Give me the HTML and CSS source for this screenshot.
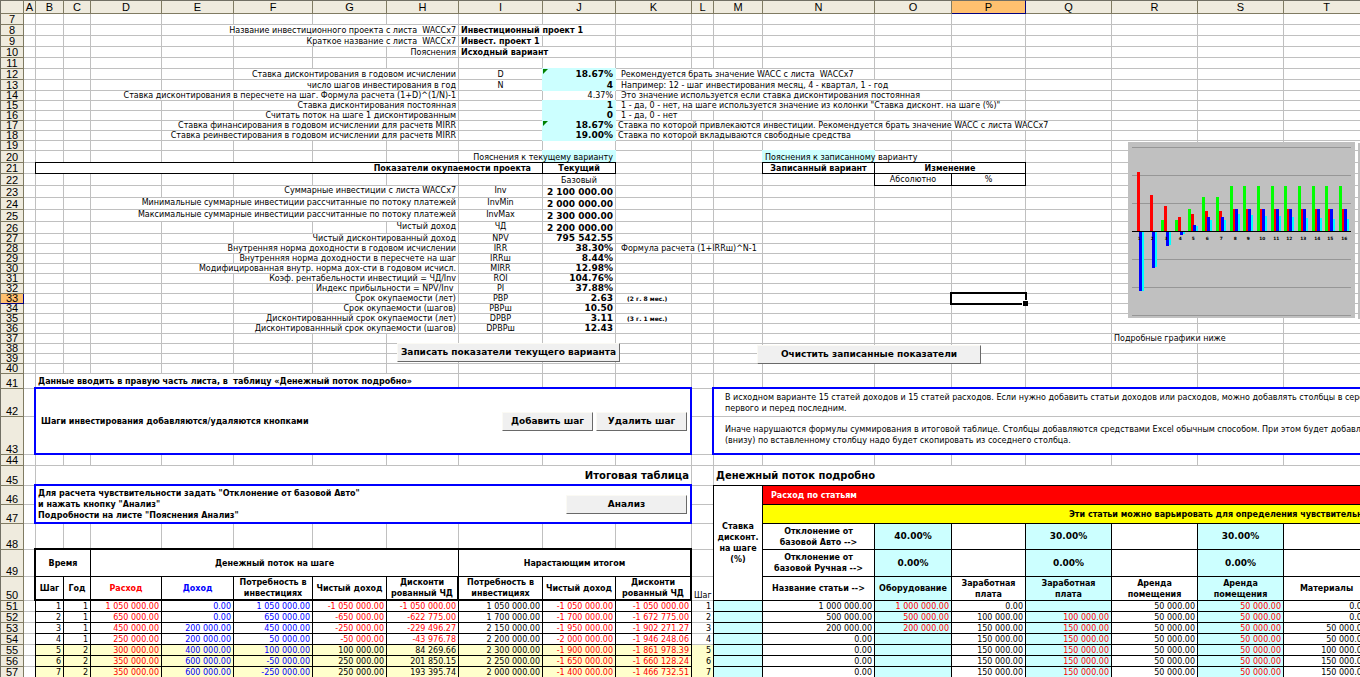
FILE: index.html
```html
<!DOCTYPE html>
<html lang="ru">
<head>
<meta charset="utf-8">
<title>Инвестиционный проект</title>
<link rel="stylesheet" href="styles.css">
</head>
<body>
<main class="sheet">
  <table class="grid" id="grid"></table>
  <button class="btn save" type="button">Записать показатели текущего варианта</button>
  <button class="btn clear" type="button">Очистить записанные показатели</button>
  <svg class="chart" id="chart" viewBox="0 0 681 528" role="img" aria-label="Денежный поток по шагам"></svg>
  <div class="next-chart"></div>
</main>
<script src="sheet.js"></script>
</body>
</html>
```

FILE: styles.css
```css
* { box-sizing: border-box; }

body {
  margin: 0;
  background: #fff;
  color: #000;
  font-family: "DejaVu Sans", Verdana, sans-serif;
  font-size: 8px;
}

.sheet {
  position: relative;
  height: 100vh;
  overflow: hidden;
}

.grid {
  table-layout: fixed;
  width: 100%;
  min-width: 1370px;
  border-collapse: separate;
  border-spacing: 0;
}

td, th {
  padding: 0 2px;
  border: 0 solid #c0c0c0;
  border-width: 0 1px 1px 0;
  line-height: 9px;
  font-weight: normal;
  text-align: left;
  vertical-align: middle;
  white-space: nowrap;
}

/* column and row headings */
th {
  padding: 0;
  background: #efebde;
  border-color: #807b62;
  font-family: "Liberation Sans", Arial, sans-serif;
  font-size: 11px;
  text-align: center;
}
thead th { border-top: 1px solid #716f64; line-height: 12px; }
tbody th { vertical-align: bottom; }
tr > th:first-child { border-left: 1px solid #716f64; }
th.current { background: #ffc06f; border-right-color: #000080; border-bottom-color: #000080; }

/* alignment */
.r { text-align: right; }
.c { text-align: center; }
.top { vertical-align: top; }
.bot { vertical-align: bottom; }
.ind { padding-left: 5px; }
.wide { padding-left: 8px; }
.inset { padding-right: 11px; }
.note { padding-left: 11px; }
.spill > div { display: flex; justify-content: flex-end; }

/* text */
.b { font-weight: bold; }
.val { font-size: 9px; font-weight: bold; text-align: right; vertical-align: bottom; }
.pct { font-size: 9px; font-weight: bold; text-align: center; }
.title { font-size: 10px; font-weight: bold; line-height: 12px; }
.tiny { font-size: 6px; font-weight: bold; }
.lines { line-height: 11px; }
.red { color: #f00; }
.blue { color: #00f; }
.white { color: #fff; }

/* fills */
.cyan { background: #cff; border-color: #cff; box-shadow: -1px 0 #cff, 0 -1px #cff, -1px -1px #cff; }
.yel { background: #ffc; border-color: #ffc; }
.bgred { background: #f00; }
.bgyellow { background: #ff0; padding-left: 306px; }

/* frames */
.k, .frame { position: relative; }
.k { border-color: #000; box-shadow: -1px 0 #000, 0 -1px #000, -1px -1px #000; }
.hb { border-bottom-width: 2px; }
.hr { border-right-width: 2px; }
.ht { box-shadow: -1px 0 #000, 0 -2px #000, -1px -2px #000; }
.hl { box-shadow: -2px 0 #000, 0 -1px #000, -2px -1px #000; }
.ht.hl { box-shadow: -2px 0 #000, 0 -2px #000, -2px -2px #000; }
.frame {
  border-color: #00f;
  border-width: 0 2px 2px 0;
  box-shadow: -2px 0 #00f, 0 -2px #00f, -2px -2px #00f;
}
.frame-top { box-shadow: -2px 0 #00f, 0 -2px #00f, -2px -2px #00f; }
.frame-bottom { border-bottom: 2px solid #00f; box-shadow: -2px 0 #00f; }
.info { padding-left: 11px; line-height: 11px; }

/* error mark in the corner of a cell */
.mark { position: relative; }
.mark::before {
  content: "";
  position: absolute;
  top: 0;
  left: 0;
  border: solid transparent;
  border-width: 0 5px 5px 0;
  border-top: 5px solid #008000;
  border-bottom: 0;
}

/* active cell */
.active { position: relative; }
.active::before {
  content: "";
  position: absolute;
  inset: -2px;
  border: 2px solid #000;
}
.active::after {
  content: "";
  position: absolute;
  right: -3px;
  bottom: -3px;
  width: 5px;
  height: 5px;
  background: #000;
  border: solid #fff;
  border-width: 1px 0 0 1px;
}

.bar { display: flex; align-items: center; gap: 3px; padding-right: 1px; }
.bar span { flex: 1; }

.btn {
  width: 91px;
  height: 19px;
  padding: 0;
  background: #f0f0f0;
  border: 1px solid #fbfaf4;
  border-right-color: #696969;
  border-bottom-color: #696969;
  font: bold 9px/11px "DejaVu Sans", Verdana, sans-serif;
  color: #000;
  text-align: center;
  white-space: nowrap;
}
.btn.analysis { width: 121px; }
.btn.save { position: absolute; left: 397px; top: 343px; width: 223px; }
.btn.clear { position: absolute; left: 757px; top: 345px; width: 224px; }

.chart {
  position: absolute;
  left: 1128px;
  top: 142px;
  width: 227px;
  height: 176px;
  background: #c0c0c0;
  shape-rendering: crispEdges;
}
.chart text { font: bold 13px "DejaVu Sans", sans-serif; text-anchor: middle; }
.next-chart {
  position: absolute;
  left: 1358px;
  top: 143px;
  width: 227px;
  height: 176px;
  background: #c0c0c0;
}
```

FILE: sheet.js
```js
const columns = { A: 12, B: 28, C: 27, D: 71, E: 72, F: 79, G: 74, H: 72, I: 84, J: 73,
  K: 76, L: 22, M: 49, N: 112, O: 77, P: 74, Q: 86, R: 86, S: 86, T: 0 };
const letters = Object.keys(columns);

const heights = {};
const setHeight = (from, to, h) => { for (let r = from; r <= to; r++) heights[r] = h; };
setHeight(7, 13, 11);
setHeight(14, 19, 10);
setHeight(20, 20, 12);
setHeight(21, 21, 11);
setHeight(22, 26, 12);
setHeight(27, 40, 10);
setHeight(41, 41, 15);
setHeight(42, 42, 28);
setHeight(43, 43, 38);
setHeight(44, 44, 11);
setHeight(45, 45, 20);
setHeight(46, 47, 19);
setHeight(48, 48, 26);
setHeight(49, 49, 27);
setHeight(50, 50, 24);
setHeight(51, 57, 11);

// address: [classes, content]
const cells = {
  'E8:H8': ['r', 'Название инвестиционного проекта с листа &nbsp;WACCx7'],
  'I8:J8': ['b', 'Инвестиционный проект 1'],
  'F9:H9': ['r', 'Краткое название с листа &nbsp;WACCx7'],
  'I9': ['b', 'Инвест. проект 1'],
  'H10': ['r', 'Пояснения'],
  'I10:J10': ['b', 'Исходный вариант'],
  'F12:H12': ['r', 'Ставка дисконтирования в годовом исчислении'],
  'I12': ['c', 'D'],
  'J12': ['val cyan mark', '18.67%'],
  'K12:N12': ['ind', 'Рекомендуется брать значение WACC с листа &nbsp;WACCx7'],
  'F13:H13': ['r', 'число шагов инвестирования в год'],
  'I13': ['c', 'N'],
  'J13': ['val cyan', '4'],
  'K13:O13': ['ind', 'Например: 12 - шаг инвестирования месяц, 4 - квартал, 1 - год'],
  'D14:H14': ['r', 'Ставка дисконтирования в пересчете на шаг. Формула расчета (1+D)^(1/N)-1'],
  'J14': ['r bot', '4.37%'],
  'K14:O14': ['ind', 'Это значение используется если ставка дисконтирования постоянная'],
  'F15:H15': ['r', 'Ставка дисконтирования постоянная'],
  'J15': ['val cyan', '1'],
  'K15:P15': ['ind', '1 - да, 0 - нет, на шаге используется значение из колонки "Ставка дисконт. на шаге (%)"'],
  'F16:H16': ['r', 'Считать поток на шаге 1 дисконтированным'],
  'J16': ['val cyan', '0'],
  'K16': ['ind', '1 - да, 0 - нет'],
  'E17:H17': ['r', 'Ставка финансирования в годовом исчислении для расчетв MIRR'],
  'J17': ['val cyan mark', '18.67%'],
  'K17:Q17': ['', 'Ставка по которой привлекаются инвестиции. Рекомендуется брать значение WACC с листа WACCx7'],
  'E18:H18': ['r', 'Ставка реинвестирования в годовом исчислении для расчетв MIRR'],
  'J18': ['val cyan', '19.00%'],
  'K18:N18': ['', 'Ставка по которой вкладываются свободные средства'],
  'J20': ['bot cyan spill', '<div>Пояснения к текущему варианту</div>'],
  'N20': ['bot cyan', 'Пояснения к записанному варианту'],
  'B21:I21': ['r b k inset', 'Показатели окупаемости проекта'],
  'J21': ['c b k', 'Текущий'],
  'N21': ['c b k', 'Записанный вариант'],
  'O21:P21': ['c b k', 'Изменение'],
  'J22': ['c bot', 'Базовый'],
  'O22': ['c k', 'Абсолютно'],
  'P22': ['c k', '%'],
  'K28:M28': ['ind', 'Формула расчета (1+IRRш)^N-1'],
  'K33': ['note tiny', '(2 г. 8 мес.)'],
  'K35': ['note tiny', '(3 г. 1 мес.)'],
  'P33': ['active', ''],
  'R37:S37': ['', 'Подробные графики ниже'],
  'B41:H41': ['b', 'Данные вводить в правую часть листа, в &nbsp;таблицу «Денежный поток подробно»'],
  'B42:K43': ['b frame ind', '<div class="bar"><span>Шаги инвестирования добавляются/удаляются кнопками</span>' +
    '<button class="btn" type="button">Добавить шаг</button><button class="btn" type="button">Удалить шаг</button></div>'],
  'M42:T42': ['info frame-top', 'В исходном варианте 15 статей доходов и 15 статей расходов. Если нужно добавить статьи доходов или расходов, можно добавлять столбцы в середину, после<br>первого и перед последним.'],
  'M43:T43': ['info frame-bottom', 'Иначе нарушаются формулы суммирования в итоговой таблице. Столбцы добавляются средствами Excel обычным способом. При этом будет добавлен<br>(внизу) по вставленному столбцу надо будет скопировать из соседнего столбца.'],
  'B45:K45': ['title r', 'Итоговая таблица'],
  'M45:T45': ['title', 'Денежный поток подробно'],
  'B46:K47': ['b frame', '<div class="bar lines"><span>Для расчета чувствительности задать "Отклонение от базовой Авто"<br>и нажать кнопку "Анализ"<br>Подробности на листе "Пояснения Анализ"</span>' +
    '<button class="btn analysis" type="button">Анализ</button></div>'],
  'M46:M50': ['c b k lines', 'Ставка<br>дисконт.<br>на шаге<br>(%)'],
  'N46:T46': ['b k bgred white wide', 'Расход по статьям'],
  'N47:T47': ['b k bgyellow', 'Эти статьи можно варьировать для определения чувствительности'],
  'N48': ['c b k lines', 'Отклонение от<br>базовой Авто --&gt;'],
  'O48': ['pct cyan k', '40.00%'], 'P48': ['k', ''],
  'Q48': ['pct cyan k', '30.00%'], 'R48': ['k', ''],
  'S48': ['pct cyan k', '30.00%'], 'T48': ['k', ''],
  'B49:C49': ['c b k ht hl', 'Время'],
  'D49:H49': ['c b k ht', 'Денежный поток на шаге'],
  'I49:K49': ['c b k ht hr', 'Нарастающим итогом'],
  'N49': ['c b k lines', 'Отклонение от<br>базовой Ручная --&gt;'],
  'O49': ['pct cyan k', '0.00%'], 'P49': ['k', ''],
  'Q49': ['pct cyan k', '0.00%'], 'R49': ['k', ''],
  'S49': ['pct cyan k', '0.00%'], 'T49': ['k', ''],
  'B50': ['c b k hl hb', 'Шаг'],
  'C50': ['c b k hb', 'Год'],
  'D50': ['c b k hb red', 'Расход'],
  'E50': ['c b k hb blue', 'Доход'],
  'F50': ['c b k hb lines', 'Потребность в<br>инвестициях'],
  'G50': ['c b k hb', 'Чистый доход'],
  'H50': ['c b k hb hr lines', 'Дисконти<br>рованный ЧД'],
  'I50': ['c b k hb lines', 'Потребность в<br>инвестициях'],
  'J50': ['c b k hb', 'Чистый доход'],
  'K50': ['c b k hb hr lines', 'Дисконти<br>рованный ЧД'],
  'L50': ['r bot', 'Шаг'],
  'N50': ['c b k', 'Название статьи --&gt;'],
  'O50': ['c b cyan k', 'Оборудование'],
  'P50': ['c b k lines', 'Заработная<br>плата'],
  'Q50': ['c b cyan k lines', 'Заработная<br>плата'],
  'R50': ['c b k lines', 'Аренда<br>помещения'],
  'S50': ['c b cyan k lines', 'Аренда<br>помещения'],
  'T50': ['c b k', 'Материалы']
};

// payback indicators, rows 23-36: [first column, label, symbol, value]
[
  ['F', 'Суммарные инвестиции с листа WACCx7', 'Inv', '2 100 000.00'],
  ['D', 'Минимальные суммарные инвестиции рассчитанные по потоку платежей', 'InvMin', '2 000 000.00'],
  ['D', 'Максимальные суммарные инвестиции рассчитанные по потоку платежей', 'InvMax', '2 300 000.00'],
  ['H', 'Чистый доход', 'ЧД', '2 200 000.00'],
  ['F', 'Чистый дисконтированный доход', 'NPV', '795 542.55'],
  ['E', 'Внутренняя норма доходности в годовом исчислении', 'IRR', '38.30%'],
  ['F', 'Внутренняя норма доходности в пересчете на шаг', 'IRRш', '8.44%'],
  ['E', 'Модифицированная внутр. норма дох-сти в годовом исчисл.', 'MIRR', '12.98%'],
  ['F', 'Коэф. рентабельности инвестиций = ЧД/Inv', 'ROI', '104.76%'],
  ['G', 'Индекс прибыльности = NPV/Inv&nbsp;', 'PI', '37.88%'],
  ['G', 'Срок окупаемости (лет)', 'PBP', '2.63'],
  ['G', 'Срок окупаемости (шагов)', 'PBPш', '10.50'],
  ['F', 'Дисконтированнный срок окупаемости (лет)', 'DPBP', '3.11'],
  ['F', 'Дисконтированнный срок окупаемости (шагов)', 'DPBPш', '12.43']
].forEach(([from, label, symbol, value], i) => {
  const row = 23 + i;
  cells[from === 'H' ? `H${row}` : `${from}${row}:H${row}`] = ['r top', label];
  cells[`I${row}`] = ['c top', symbol];
  cells[`J${row}`] = ['val', value];
});

// cash flow, rows 51-57, columns B-T
[
  '1|1|1 050 000.00|0.00|1 050 000.00|-1 050 000.00|-1 050 000.00|1 050 000.00|-1 050 000.00|-1 050 000.00|1||1 000 000.00|1 000 000.00|0.00||50 000.00|50 000.00|0.00',
  '2|1|650 000.00|0.00|650 000.00|-650 000.00|-622 775.00|1 700 000.00|-1 700 000.00|-1 672 775.00|2||500 000.00|500 000.00|100 000.00|100 000.00|50 000.00|50 000.00|0.00',
  '3|1|450 000.00|200 000.00|450 000.00|-250 000.00|-229 496.27|2 150 000.00|-1 950 000.00|-1 902 271.27|3||200 000.00|200 000.00|150 000.00|150 000.00|50 000.00|50 000.00|50 000.00',
  '4|1|250 000.00|200 000.00|50 000.00|-50 000.00|-43 976.78|2 200 000.00|-2 000 000.00|-1 946 248.06|4||0.00||150 000.00|150 000.00|50 000.00|50 000.00|50 000.00',
  '5|2|300 000.00|400 000.00|100 000.00|100 000.00|84 269.66|2 300 000.00|-1 900 000.00|-1 861 978.39|5||0.00||150 000.00|150 000.00|50 000.00|50 000.00|100 000.00',
  '6|2|350 000.00|600 000.00|-50 000.00|250 000.00|201 850.15|2 250 000.00|-1 650 000.00|-1 660 128.24|6||0.00||150 000.00|150 000.00|50 000.00|50 000.00|150 000.00',
  '7|2|350 000.00|600 000.00|-250 000.00|250 000.00|193 395.74|2 000 000.00|-1 400 000.00|-1 466 732.51|7||0.00||150 000.00|150 000.00|50 000.00|50 000.00|150 000.00'
].forEach((line, i) => {
  line.split('|').forEach((text, j) => {
    const col = letters[j + 1];
    const style = ['r'];
    if (i > 3 && col <= 'L') style.push('yel');
    if ('MOQS'.includes(col)) style.push('cyan');
    if (col !== 'L') style.push('k');
    if ('DOQS'.includes(col) || ('GHJK'.includes(col) && text[0] === '-')) style.push('red');
    if ('EF'.includes(col)) style.push('blue');
    cells[col + (51 + i)] = [style.join(' '), text];
  });
});

const ranges = {};
for (const [address, [style, content]] of Object.entries(cells)) {
  const [from, to = from] = address.split(':');
  ranges[from] = {
    style, content,
    cols: letters.indexOf(to[0]) - letters.indexOf(from[0]) + 1,
    rows: to.slice(1) - from.slice(1) + 1
  };
}

const currentCol = 'P', currentRow = 33;
let html = '<colgroup><col style="width:24px">' +
  letters.map(l => columns[l] ? `<col style="width:${columns[l]}px">` : '<col>').join('') + '</colgroup>';
html += '<thead><tr style="height:14px"><th></th>' +
  letters.map(l => `<th scope="col"${l === currentCol ? ' class="current"' : ''}>${l}</th>`).join('') + '</tr></thead><tbody>';

const taken = new Set();
for (let row = 7; row <= 57; row++) {
  html += `<tr style="height:${heights[row]}px"><th scope="row"${row === currentRow ? ' class="current"' : ''}>${row}</th>`;
  letters.forEach((letter, index) => {
    if (taken.has(letter + row)) return;
    const cell = ranges[letter + row];
    if (!cell) { html += '<td></td>'; return; }
    for (let r = 0; r < cell.rows; r++)
      for (let c = 0; c < cell.cols; c++) taken.add(letters[index + c] + (row + r));
    html += `<td class="${cell.style}" colspan="${cell.cols}" rowspan="${cell.rows}">${cell.content}</td>`;
  });
  html += '</tr>';
}
document.getElementById('grid').innerHTML = html + '</tbody>';

// chart: bar edges in thirds of a pixel, axis at 267
const starts = [27, 66, 108, 150, 189, 231, 273, 315, 354, 396, 438, 477, 519, 561, 600, 642];
const axis = 267;
const series = [
  { color: '#0f0', dx: -9, w: 9, y: [267, 267, 234, 234, 201, 165, 165, 132, 132, 132, 132, 132, 132, 132, 132, 132] },
  { color: '#f00', dx: 0, w: 9, y: [90, 159, 192, 225, 216, 207, 207, 201, 201, 201, 201, 201, 201, 201, 201, 201] },
  { color: '#0ff', dx: 12, w: 9, y: [447, 375, 309, 276, 252, 234, 234, 216, 219, 222, 222, 225, 228, 228, 231, 231] },
  { color: '#00f', dx: 6, w: 9, y: [447, 378, 312, 279, 249, 225, 225, 201, 201, 201, 201, 201, 201, 201, 201, 201] }
];
let svg = [15, 99, 183, 351, 435, 519].map(y => `<rect x="12" y="${y}" width="657" height="3" fill="#969696"/>`).join('');
for (const s of series) {
  svg += starts.map((x, i) =>
    `<rect x="${x + s.dx}" y="${Math.min(axis, s.y[i])}" width="${s.w}" height="${Math.abs(axis - s.y[i])}" fill="${s.color}"/>`).join('');
}
svg += `<rect x="12" y="${axis}" width="657" height="3" fill="#000"/>`;
svg += starts.map((x, i) => `<text x="${x + 7}" y="294">${i + 1}</text>`).join('');
document.getElementById('chart').innerHTML = svg;
```
